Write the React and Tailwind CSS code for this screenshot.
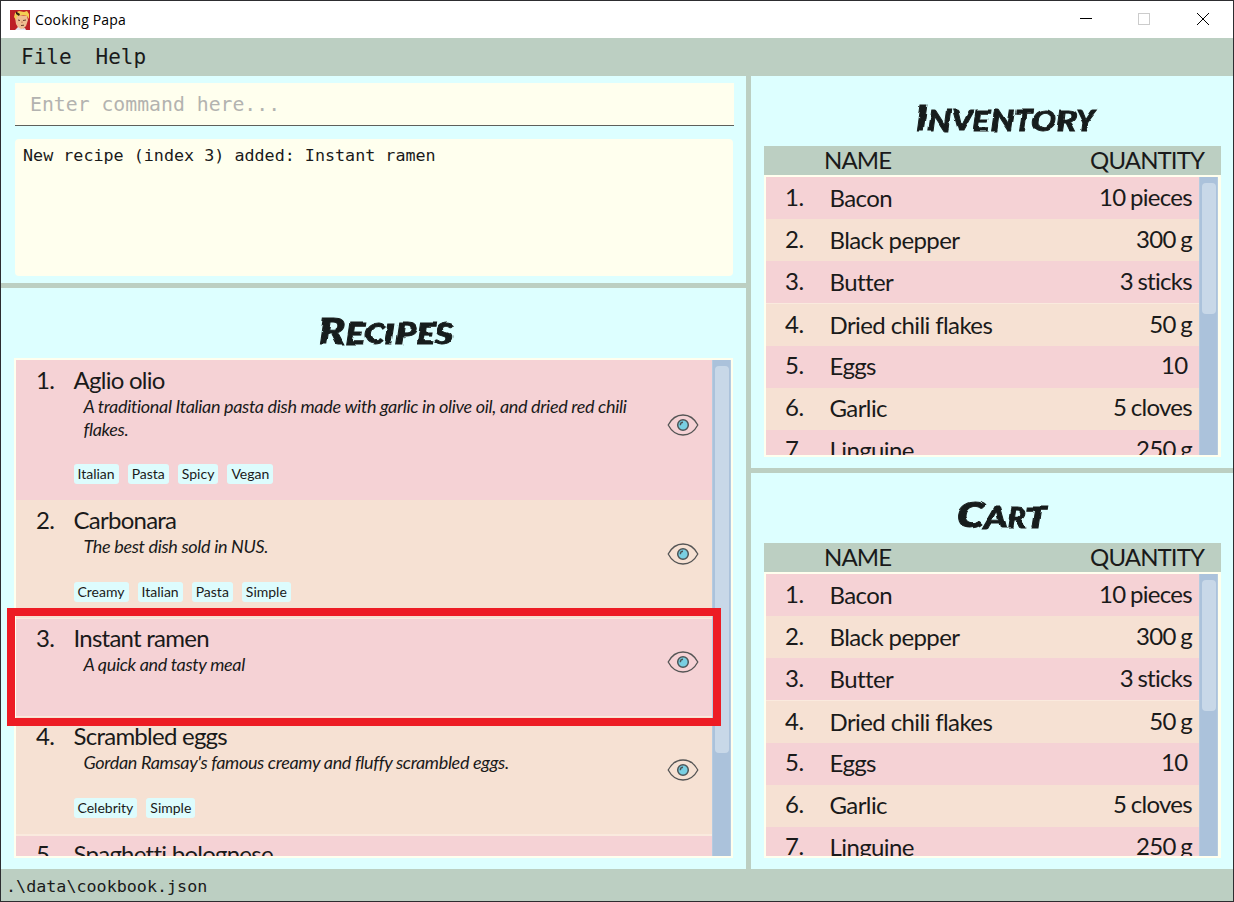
import React from "react";

const recipes = [
  { name: "Aglio olio", desc: "A traditional Italian pasta dish made with garlic in olive oil, and dried red chili flakes.", tags: ["Italian", "Pasta", "Spicy", "Vegan"], size: "h-[140px] bg-[#f5d2d5] pt-[5px]" },
  { name: "Carbonara", desc: "The best dish sold in NUS.", tags: ["Creamy", "Italian", "Pasta", "Simple"], size: "h-[118px] bg-[#f6e1d3] pt-[5px]" },
  { name: "Instant ramen", desc: "A quick and tasty meal", tags: [], size: "h-[98px] bg-[#f5d2d5] border-t border-[#faeade] pt-[4px]" },
  { name: "Scrambled eggs", desc: "Gordan Ramsay's famous creamy and fluffy scrambled eggs.", tags: ["Celebrity", "Simple"], size: "h-[118px] bg-[#f6e1d3] border-t border-[#faeade] pt-[4px]" },
  { name: "Spaghetti bolognese", desc: "", tags: [], size: "h-[118px] bg-[#f5d2d5] border-t-2 border-[#faeade] pt-[3px]" },
];

const items = [
  ["Bacon", "10 pieces"],
  ["Black pepper", "300 g"],
  ["Butter", "3 sticks"],
  ["Dried chili flakes", "50 g"],
  ["Eggs", "10 "],
  ["Garlic", "5 cloves"],
  ["Linguine", "250 g"],
];

function Heading({ first, rest, className, stretch }) {
  return (
    <h2 className={"flex shrink-0 items-baseline justify-center whitespace-nowrap font-['Lato'] font-black italic leading-none text-[#171c1c] [-webkit-text-stroke:0.9px_#171c1c] " + className}>
      <span className={"inline-block origin-bottom-left [filter:url(#marker)] " + stretch}>
        <span className="text-[36px]">{first}</span>
        <span className="text-[29px]">{rest}</span>
      </span>
    </h2>
  );
}

function Eye() {
  return (
    <svg width="32" height="22" viewBox="0 0 32 22" fill="none" className="shrink-0">
      <path d="M1.200 11C4.700 4.400 10 1 16 1s11.300 3.400 14.800 10C27.300 17.600 22 21 16 21S4.700 17.600 1.200 11Z" stroke="#555" strokeWidth="1.300" />
      <circle cx="16" cy="11" r="5.300" fill="#79cfe2" stroke="#4d5558" strokeWidth="1.500" />
      <path d="M13.300 11.200c0-1.800 1.100-2.800 2.700-2.900" stroke="#4d5558" strokeWidth="1.400" />
    </svg>
  );
}

function Scrollbar({ thumb }) {
  return (
    <div className="flex w-[19px] shrink-0 flex-col border-x border-[#b5cbe0] bg-[#abc2db] pl-[2px] pr-px pt-[6px]">
      <div className={"rounded-[4px] bg-[#c8d8e8] " + thumb} />
    </div>
  );
}

function Table({ first, title, className, stretch }) {
  return (
    <section className={"flex flex-col pl-[13px] pr-3 " + className}>
      <Heading first={first} rest={title} stretch={stretch} className="h-[70px] pt-[23px]" />
      <div className="flex h-[29px] shrink-0 items-start justify-between bg-[#bccfc2] pl-[60px] pr-[17px] text-[24px] leading-[27px] tracking-[-0.9px]">
        <span>NAME</span>
        <span>QUANTITY</span>
      </div>
      <div className="flex min-h-0 flex-1 overflow-hidden border-2 border-r-[3px] border-[#ffffee]">
        <ol className="min-w-0 flex-1 overflow-hidden">
          {items.map(([name, qty], i) => (
            <li key={name} className={"flex items-start pl-[19px] pr-[7px] text-[24px] " + (i === 3 ? "h-[43px] border-t border-[#faeade] " : "h-[42px] ") + (i > 3 ? "leading-[38px] " : "leading-[40px] ") + (i % 2 ? "bg-[#f6e1d3]" : "bg-[#f5d2d5]")}>
              <span className="w-[44.500px] tracking-[-0.5px]">{i + 1}.</span>
              <span className="flex-1 pt-px tracking-[-0.6px]">{name}</span>
              <span className="whitespace-pre tracking-[-0.7px] [word-spacing:-1px]">{qty}</span>
            </li>
          ))}
        </ol>
        <Scrollbar thumb="h-[131px]" />
      </div>
    </section>
  );
}

export default function App() {
  return (
    <div className="relative flex h-[902px] w-[1234px] flex-col overflow-hidden border border-[#2d2d30] bg-[#ddffff] font-['Lato',sans-serif] text-[#1a1a1a]">
      <header className="flex h-[37px] shrink-0 items-center bg-white pl-[9px] text-black">
        <svg width="20" height="20" viewBox="0 0 20 20" className="shrink-0">
          <filter id="marker" x="-5%" y="-10%" width="110%" height="120%">
            <feTurbulence type="fractalNoise" baseFrequency="0.06" numOctaves="1" seed="4" />
            <feDisplacementMap in="SourceGraphic" scale="6" xChannelSelector="R" yChannelSelector="G" />
          </filter>
          <path fill="#bd2026" d="M0 0h20v20H0z" />
          <path fill="#efbd91" d="M5 7 8 5l9 1 1 4-2 6-3 3H9l-3-5Z" />
          <path fill="#f4ce52" d="m5 3 4-2 5 1 3-1 2 3v5l-2-3-4-1-6 1-1 4-2-3Z" />
          <path fill="#302013" d="M6 1.500 10 4 9 6 6 4Z" />
          <path stroke="#633c2c" strokeWidth="1" fill="none" d="m8 10 2 .5m3 0 3-.5m-5 5.500 3-.3" />
          <path fill="#e3e6ee" d="m5 20 3-3 3 2 4-1 1 2Z" />
          <path fill="#d48e6c" d="m12 10 1 3h-2Z" />
        </svg>
        <h1 className="ml-[5px] flex-1 font-['Open_Sans'] text-[14px] font-normal tracking-[0.17px]">Cooking Papa</h1>
        <svg width="159" height="20" viewBox="0 0 159 20" fill="none" className="-mt-px shrink-0" shapeRendering="crispEdges">
          <path d="M6 9.500h12" stroke="#000" />
          <path d="M64.500 4.500h11v11h-11Z" stroke="#ccc" />
          <path d="m123 4 12 12m0-12-12 12" stroke="#000" shapeRendering="auto" />
        </svg>
      </header>
      <nav className="flex h-[38px] shrink-0 items-center gap-[24px] bg-[#bccfc2] pl-5 pt-[2px] font-['DejaVu_Sans_Mono',monospace] text-[21px]">
        <span>File</span>
        <span>Help</span>
      </nav>
      <main className="flex min-h-0 flex-1">
        <div className="flex w-[745px] shrink-0 flex-col">
          <section className="flex h-[207px] shrink-0 flex-col pl-[14px] pr-3 pt-[7px] font-['DejaVu_Sans_Mono',monospace]">
            <div className="flex h-[43px] shrink-0 items-center border-b border-[#5e605b] bg-[#ffffee] pl-[15px] pt-[2px] text-[19.800px] text-[#b3b3b0]">Enter command here...</div>
            <div className="mr-px mt-[13px] h-[137px] rounded-sm bg-[#ffffee] pl-2 pt-[5px] text-[16.730px] leading-[23px]">New recipe (index 3) added: Instant ramen</div>
          </section>
          <div className="h-[5px] shrink-0 bg-[#bccfc2]" />
          <section className="flex min-h-0 flex-1 flex-col pb-[11px] pl-[13px] pr-[13px]">
            <Heading first="R" rest="ECIPES" stretch="[transform:translateX(1px)_scaleX(1.21)]" className="h-[70px] pt-[24px]" />
            <div className="flex min-h-0 flex-1 overflow-hidden border-2 border-[#ffffee]">
              <ol className="min-w-0 flex-1 overflow-hidden">
                {recipes.map((r, i) => (
                  <li key={r.name} className={"flex pl-5 " + r.size}>
                    <span className="w-[37.500px] shrink-0 text-[24px] leading-[30px] tracking-[-0.8px]">{i + 1}.</span>
                    <div className="flex min-w-0 flex-1 flex-col pb-4">
                      <h3 className="text-[24px] leading-[30px] tracking-[-0.75px]">{r.name}</h3>
                      <p className="max-w-[580px] pl-[10px] text-[18px] italic leading-[23px] tracking-[-0.33px]">{r.desc}</p>
                      <div className="mt-auto flex gap-[9px]">
                        {r.tags.map((t) => (
                          <span key={t} className="h-5 rounded-[3px] bg-[#ddfcfd] px-1 text-[14px] leading-5">{t}</span>
                        ))}
                      </div>
                    </div>
                    <div className="flex w-[45px] shrink-0 items-center pb-[15px]"><Eye /></div>
                  </li>
                ))}
              </ol>
              <Scrollbar thumb="h-[387px]" />
            </div>
          </section>
        </div>
        <div className="w-[5px] shrink-0 bg-[#bccfc2]" />
        <div className="flex min-w-0 flex-1 flex-col">
          <Table first="I" title="NVENTORY" stretch="[transform:translateX(3px)_scaleX(1.13)]" className="h-[392px] shrink-0 pb-[11px]" />
          <div className="h-[5px] shrink-0 bg-[#bccfc2]" />
          <Table first="C" title="ART" stretch="[transform:translateX(2px)_scaleX(1.2)]" className="min-h-0 flex-1 pb-[11px]" />
        </div>
      </main>
      <footer className="flex h-8 shrink-0 items-center bg-[#bccfc2] pl-[5px] pt-[3px] font-['DejaVu_Sans_Mono',monospace] text-[16.730px]">.\data\cookbook.json</footer>
      <div className="pointer-events-none absolute left-[6px] top-[607px] h-[118px] w-[714px] border-8 border-[#ed1c24]" />
    </div>
  );
}
